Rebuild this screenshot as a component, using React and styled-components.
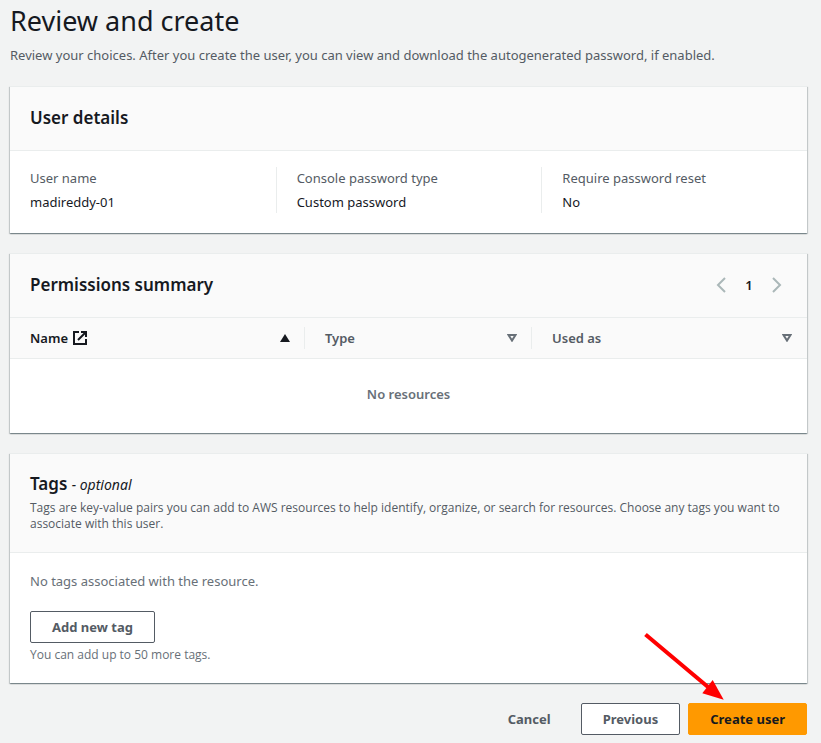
import React from "react";
import styled, { createGlobalStyle } from "styled-components";

const GlobalStyle = createGlobalStyle`
  *, *::before, *::after { box-sizing: border-box; }
  body {
    margin: 0;
    background: #f2f3f3;
    color: #16191f;
    font: 400 13px/20px "Noto Sans", "Open Sans", sans-serif;
  }
  h1, h2, p, dl, dd { margin: 0; }
  button { font: inherit; cursor: pointer; }
`;

const Page = styled.main`
  padding: 3px 14px 8px 10px;
`;

const PageTitle = styled.h1`
  font-size: 27px;
  line-height: 36px;
  font-weight: 400;
`;

const PageIntro = styled.p`
  margin-top: 6px;
  color: #545b64;
`;

const Panels = styled.div`
  display: grid;
  gap: 20px;
  margin-top: 21px;
`;

const Panel = styled.section`
  background: #fff;
  border-top: 1px solid #eaeded;
  box-shadow:
    0 1px 1px 0 rgba(0, 28, 36, 0.3),
    1px 1px 1px 0 rgba(0, 28, 36, 0.15),
    -1px 1px 1px 0 rgba(0, 28, 36, 0.15);
`;

const PanelHeader = styled.header`
  display: flex;
  align-items: center;
  justify-content: space-between;
  min-height: 64px;
  padding: ${(p) => (p.$tall ? "19px" : "18px")} 20px 20px;
  background: #fafafa;
  border-bottom: 1px solid #eaeded;
`;

const PanelTitle = styled.h2`
  font-size: 17px;
  line-height: 22px;
  font-weight: 600;
`;

const Optional = styled.span`
  font-size: 14px;
  font-weight: 400;
  font-style: italic;
`;

const Small = styled.p`
  font-family: "Open Sans", "Noto Sans", sans-serif;
  font-size: 12px;
  line-height: 16px;
  color: ${(p) => p.$color || "#687078"};
  margin-top: 4px;
`;

const Details = styled.dl`
  display: grid;
  grid-template-columns: repeat(3, 1fr);
  padding: 16px 0 20px;
`;

const Detail = styled.div`
  padding: 1px 20px;
  & + & { border-left: 1px solid #eaeded; }
`;

const Label = styled.dt`
  color: #545b64;
`;

const Value = styled.dd`
  && { margin-top: 4px; }
`;

const Pagination = styled.nav`
  display: flex;
  align-items: center;
  gap: 14px;
  font-weight: 600;
`;

const PageArrow = styled.button`
  display: flex;
  padding: 0;
  border: 0;
  background: none;
  color: #aab7b8;
  width: 20px;
  justify-content: center;
`;

const PageNumber = styled.button`
  padding: 0;
  border: 0;
  background: none;
  color: #16191f;
  width: 8px;
`;

const Table = styled.table`
  width: 100%;
  table-layout: fixed;
  border-collapse: collapse;
`;

const HeadCell = styled.th`
  width: ${(p) => p.$width};
  height: 40px;
  padding: 0;
  background: #fafafa;
  border-bottom: 1px solid #eaeded;
  text-align: left;
`;

const SortButton = styled.button`
  display: flex;
  align-items: center;
  justify-content: space-between;
  width: 100%;
  height: 22px;
  padding: 0 14px 0 20px;
  border: 0;
  border-right: 1px solid ${(p) => (p.$last ? "transparent" : "#eaeded")};
  background: none;
  color: ${(p) => (p.$active ? "#16191f" : "#545b64")};
  font-weight: 600;
`;

const HeadText = styled.span`
  display: flex;
  align-items: center;
  gap: 4px;
`;

const EmptyCell = styled.td`
  height: 75px;
  padding: 0 0 4px;
  text-align: center;
  font-weight: 600;
  color: #687078;
`;

const TagsBody = styled.div`
  padding: 18px 20px 20px;
  color: #687078;
`;

const Button = styled.button`
  height: 32px;
  padding: 0 21px;
  border: 1px solid ${(p) => p.$border || "#545b64"};
  border-radius: 2px;
  background: ${(p) => p.$background || "#fff"};
  color: ${(p) => p.$color || "#545b64"};
  font-weight: 700;
  white-space: nowrap;
`;

const AddRow = styled.div`
  margin-top: 20px;
`;

const Actions = styled.footer`
  display: flex;
  justify-content: flex-end;
  gap: 8px;
  margin-top: 20px;
`;

const Primary = styled.div`
  position: relative;
`;

const Pointer = styled.svg`
  position: absolute;
  right: 83px;
  bottom: 34px;
  pointer-events: none;
`;

const Chevron = ({ d }) => (
  <svg width="12" height="16" viewBox="0 0 12 16" fill="none" stroke="currentColor" strokeWidth="2" aria-hidden="true">
    <path d={d} />
  </svg>
);

const ExternalIcon = () => (
  <svg width="16" height="16" viewBox="0 0 16 16" fill="none" stroke="currentColor" strokeWidth="2" aria-hidden="true">
    <path d="M7 2H2v12h12V9" />
    <path d="M9 2h5v5M14 2 6 10" />
  </svg>
);

const SortIcon = ({ active }) => (
  <svg width="10" height="8" viewBox="0 0 10 8" aria-hidden="true">
    {active ? (
      <path d="M5 0 10 8H0z" fill="#16191f" />
    ) : (
      <path d="M1.5 1h7L5 6.6z" fill="none" stroke="#687078" strokeWidth="2" />
    )}
  </svg>
);

const details = [
  ["User name", "madireddy-01"],
  ["Console password type", "Custom password"],
  ["Require password reset", "No"],
];

const columns = [
  { name: "Name", width: "37%", active: true, external: true },
  { name: "Type", width: "28.5%" },
  { name: "Used as", width: "34.5%" },
];

export default function App() {
  return (
    <>
      <GlobalStyle />
      <Page>
        <PageTitle>Review and create</PageTitle>
        <PageIntro>
          Review your choices. After you create the user, you can view and download the autogenerated password, if enabled.
        </PageIntro>
        <Panels>
          <Panel>
            <PanelHeader>
              <PanelTitle>User details</PanelTitle>
            </PanelHeader>
            <Details>
              {details.map(([label, value]) => (
                <Detail key={label}>
                  <Label>{label}</Label>
                  <Value>{value}</Value>
                </Detail>
              ))}
            </Details>
          </Panel>

          <Panel>
            <PanelHeader>
              <PanelTitle>Permissions summary</PanelTitle>
              <Pagination aria-label="Pages">
                <PageArrow aria-label="Previous page"><Chevron d="M10 1 3 8l7 7" /></PageArrow>
                <PageNumber>1</PageNumber>
                <PageArrow aria-label="Next page"><Chevron d="m2 1 7 7-7 7" /></PageArrow>
              </Pagination>
            </PanelHeader>
            <Table>
              <thead>
                <tr>
                  {columns.map((c, i) => (
                    <HeadCell key={c.name} $width={c.width} scope="col">
                      <SortButton $active={c.active} $last={i === columns.length - 1}>
                        <HeadText>
                          {c.name}
                          {c.external && <ExternalIcon />}
                        </HeadText>
                        <SortIcon active={c.active} />
                      </SortButton>
                    </HeadCell>
                  ))}
                </tr>
              </thead>
              <tbody>
                <tr>
                  <EmptyCell colSpan={3}>No resources</EmptyCell>
                </tr>
              </tbody>
            </Table>
          </Panel>

          <Panel>
            <PanelHeader $tall>
              <div>
                <PanelTitle>
                  Tags <Optional>- optional</Optional>
                </PanelTitle>
                <Small $color="#545b64">
                  Tags are key-value pairs you can add to AWS resources to help identify, organize, or search for resources. Choose any tags you want to associate with this user.
                </Small>
              </div>
            </PanelHeader>
            <TagsBody>
              <p>No tags associated with the resource.</p>
              <AddRow>
                <Button>Add new tag</Button>
              </AddRow>
              <Small>You can add up to 50 more tags.</Small>
            </TagsBody>
          </Panel>
        </Panels>

        <Actions>
          <Button $border="transparent" $background="transparent">Cancel</Button>
          <Button>Previous</Button>
          <Primary>
            <Button $border="#ff9900" $background="#ff9900" $color="#16191f">Create user</Button>
            <Pointer width="80" height="70" viewBox="0 0 80 70" aria-hidden="true">
              <path d="M1.5 3.5 64 56" stroke="#f00" strokeWidth="4" />
              <path d="M79.7 68.7 58.3 62.3 68.7 49z" fill="#f00" />
            </Pointer>
          </Primary>
        </Actions>
      </Page>
    </>
  );
}
